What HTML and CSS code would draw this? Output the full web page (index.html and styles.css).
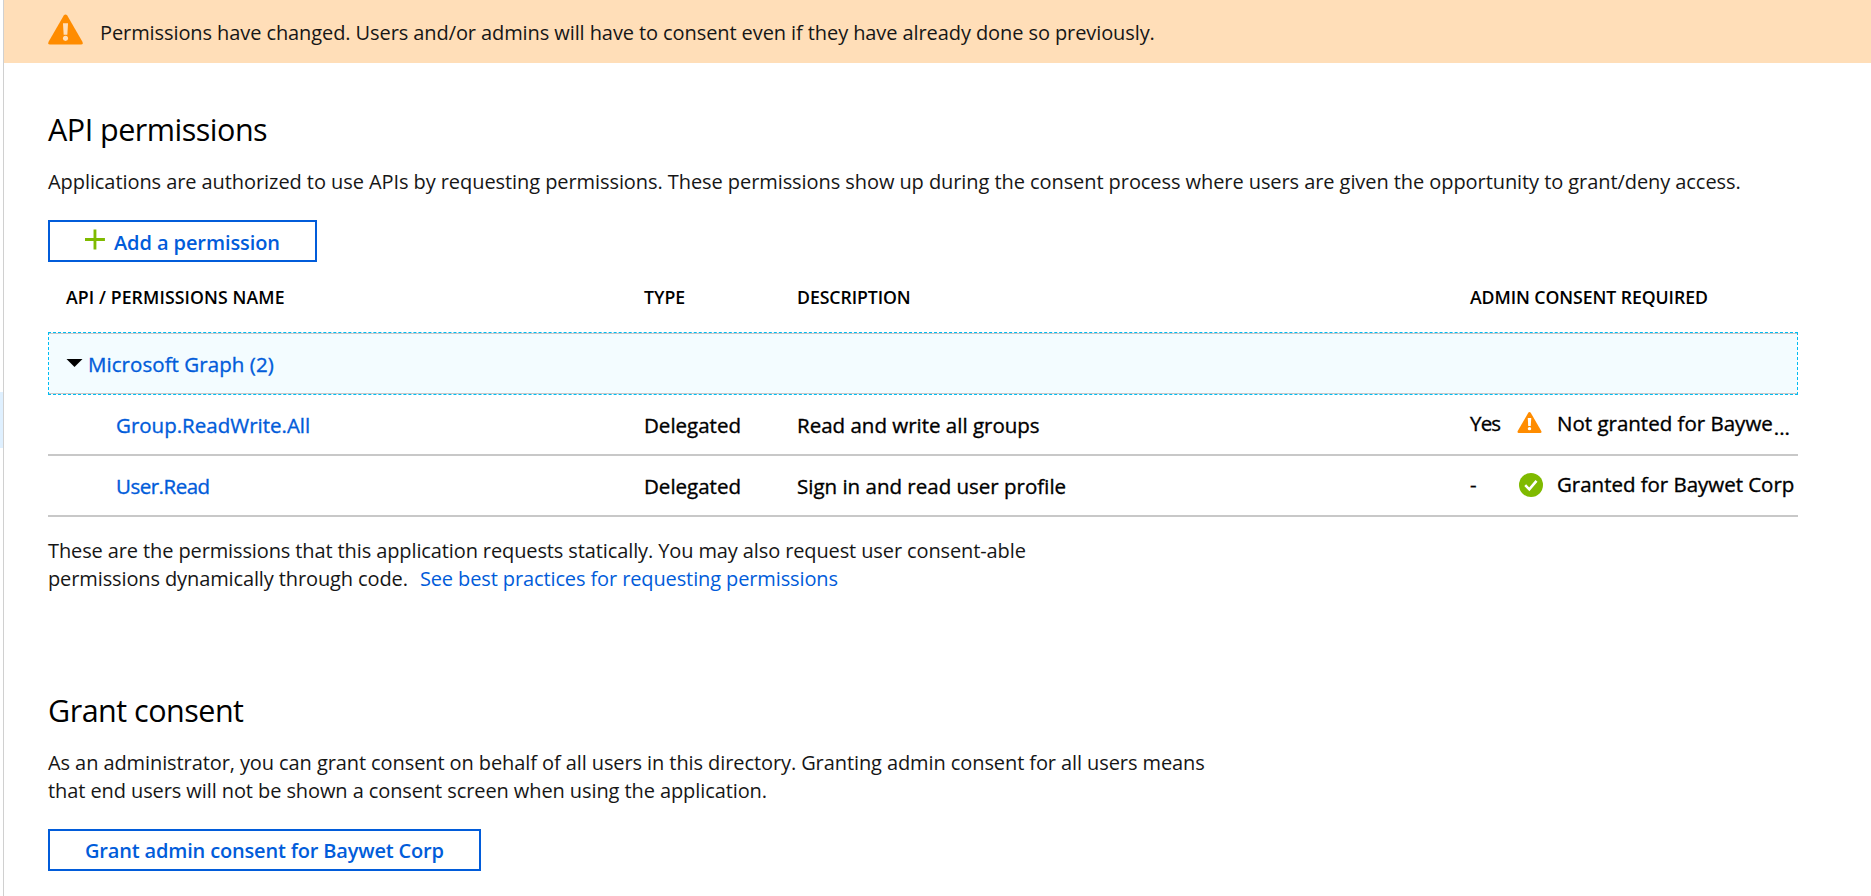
FILE: index.html
```html
<!DOCTYPE html>
<html lang="en">
<head>
<meta charset="utf-8">
<title>API permissions</title>
<link rel="stylesheet" href="styles.css">
</head>
<body>
<div class="app">
  <aside class="rail"><div class="rail-selected"></div></aside>
  <main class="blade">
    <div class="banner" role="alert">
      <svg class="banner-icon" viewBox="0 0 36 31" aria-hidden="true">
        <path fill="#ff8c00" d="M16.2 1.2Q18-1.1 19.8 1.2L35.4 28.2Q36.4 31 34 31H2Q-.4 31 .6 28.2Z"/>
        <path fill="#ffdeb8" d="M15.4 9h5.2l-.7 12h-3.8z"/><circle cx="18" cy="24.6" r="2.6" fill="#ffdeb8"/>
      </svg>
      <span>Permissions have changed. Users and/or admins will have to consent even if they have already done so previously.</span>
    </div>

    <section class="content">
      <h1 class="title">API permissions</h1>
      <p class="lead">Applications are authorized to use APIs by requesting permissions. These permissions show up during the consent process where users are given the opportunity to grant/deny access.</p>

      <button class="btn btn-add">
        <svg class="plus" viewBox="0 0 21 21" aria-hidden="true"><path fill="#7fba00" d="M9 0h3v9h9v3h-9v9H9v-9H0V9h9z"/></svg>
        <span>Add a permission</span>
      </button>

      <div class="table">
        <div class="row head">
          <span class="name">API / PERMISSIONS NAME</span><span>TYPE</span><span class="desc-head">DESCRIPTION</span><span class="admin-head">ADMIN CONSENT REQUIRED</span>
        </div>
        <div class="group">
          <div class="group-inner">
            <svg class="caret" viewBox="0 0 16 8" aria-hidden="true"><path d="M0 0h16L8 8z"/></svg>
            <a class="link group-link">Microsoft Graph (2)</a>
          </div>
        </div>
        <div class="row item">
          <a class="link child">Group.ReadWrite.All</a><span>Delegated</span><span>Read and write all groups</span>
          <span class="consent">
            <span class="flag yes">Yes</span>
            <svg class="warn" viewBox="0 0 36 31" aria-hidden="true">
              <path fill="#ff8c00" d="M16.2 1.2Q18-1.1 19.8 1.2L35.4 28.2Q36.4 31 34 31H2Q-.4 31 .6 28.2Z"/>
              <path fill="#fff" d="M15.4 9h5.2l-.7 11.6h-3.8z"/><circle cx="18" cy="24.6" r="2.5" fill="#fff"/>
            </svg>
            <span class="status">Not granted for Baywe<span class="dots">...</span></span>
          </span>
        </div>
        <div class="row item">
          <a class="link child user-read">User.Read</a><span>Delegated</span><span>Sign in and read user profile</span>
          <span class="consent">
            <span class="flag">-</span>
            <svg class="ok" viewBox="0 0 24 24" aria-hidden="true"><circle cx="12" cy="12" r="12" fill="#7fba00"/><path d="M6.2 12.2l4.1 4.1 7.2-8.4" fill="none" stroke="#fff" stroke-width="2.6"/></svg>
            <span class="status">Granted for Baywet Corp</span>
          </span>
        </div>
      </div>

      <p class="note">These are the permissions that this application requests statically. You may also request user consent-able<br>permissions dynamically through code. <a class="more">See best practices for requesting permissions</a></p>

      <h2 class="title grant-title">Grant consent</h2>
      <p class="grant-text">As an administrator, you can grant consent on behalf of all users in this directory. Granting admin consent for all users means<br>that end users will not be shown a consent screen when using the application.</p>
      <button class="btn btn-grant">Grant admin consent for Baywet Corp</button>
    </section>
  </main>
</div>
</body>
</html>
```

FILE: styles.css
```css
* { box-sizing: border-box; }

body {
  margin: 0;
  background: #fff;
  color: #161616;
  font: 20px/28px "Open Sans", "Noto Sans", sans-serif;
  letter-spacing: -0.09px;
  white-space: nowrap;
}

.app { display: flex; height: 896px; overflow: hidden; }

.rail { width: 4px; padding-top: 392px; border-right: 1px solid #d0d0d0; }
.rail-selected { height: 56px; background: #dff0ff; }

.blade { flex: 1; min-width: 0; }

.banner {
  display: flex;
  height: 63px;
  padding: 14px 0 0 44px;
  background: #ffdeb8;
}
.banner-icon { width: 35px; height: 31px; margin-right: 17px; }
.banner span { padding-top: 5px; }

.content { padding: 44px 73px 0 44px; }

.title {
  margin: 0;
  color: #000;
  font-size: 30.5px;
  font-weight: 400;
  line-height: 44px;
  letter-spacing: -0.5px;
}
.lead { margin: 17px 0 0; letter-spacing: -0.073px; }

.btn {
  display: flex;
  height: 42px;
  padding: 0 35px;
  border: 2px solid #015cda;
  background: #fff;
  color: #015cda;
  font: 600 20px/38px "Open Sans", sans-serif;
  letter-spacing: -0.12px;
}
.btn-add { width: 269px; margin-top: 24px; letter-spacing: -0.08px; }
.btn-add span { padding-top: 2px; }
.plus { width: 21px; height: 21px; margin: 7px 9px 0 0; }

.table { width: 1750px; }
.row { display: grid; grid-template-columns: 596px 153px 673px 328px; }
.head {
  height: 70px;
  padding-top: 22px;
  color: #000;
  font-size: 17.7px;
  font-weight: 600;
  line-height: 27px;
  letter-spacing: 0;
}
.name { padding-left: 18px; letter-spacing: 0.1px; }
.desc-head, .admin-head { letter-spacing: -0.08px; }

.group { height: 63px; border: 1px dashed #00bcf2; background: #f3fcff; }
.group-inner {
  display: flex;
  height: 61px;
  padding: 16px 0 0 17px;
  border: solid #c8c8c8;
  border-width: 1px 0;
}
.caret { width: 17px; height: 8px; margin: 9px 5px 0 0; }

.group-link, .item {
  font-size: 20.5px;
  letter-spacing: 0;
  -webkit-text-stroke: 0.35px;
}
.group-link { letter-spacing: 0.06px; }
.link { color: #015cda; }
.item { height: 61px; padding-top: 16px; border-bottom: 2px solid #c8c8c8; color: #000; }
.child { padding-left: 68px; }
.user-read { letter-spacing: -0.5px; }

.consent { display: flex; margin-top: -2px; }
.flag { width: 47px; }
.yes { letter-spacing: -0.8px; }
.warn { width: 25px; height: 21px; margin: 3px 15px 0 0; }
.ok { width: 24px; height: 24px; margin: 3px 14px 0 2px; }
.ok + .status { letter-spacing: -0.03px; }
.dots { position: relative; top: 4px; margin-left: 1px; }

.note { margin: 20px 0 0; letter-spacing: -0.115px; }
.more { margin-left: 7px; color: #015cda; }

.grant-title { margin-top: 95px; }
.grant-text { margin: 17px 0 0; }
.btn-grant { width: 433px; margin-top: 24px; padding-top: 1px; letter-spacing: -0.17px; }
```
